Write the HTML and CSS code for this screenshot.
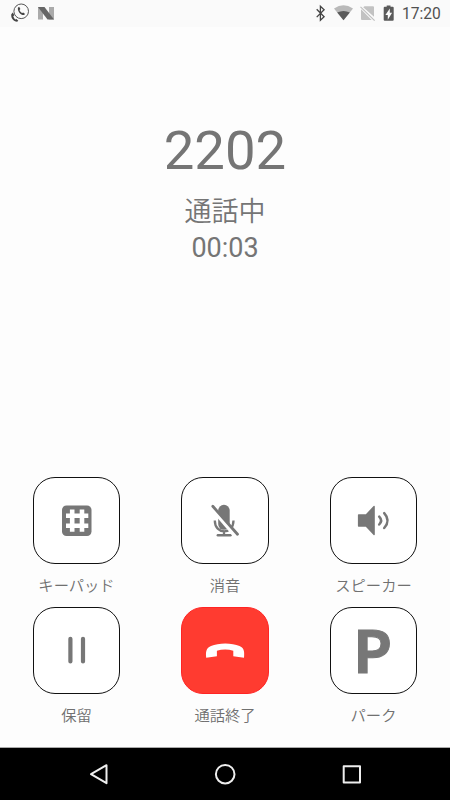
FILE: index.html
```
<!DOCTYPE html>
<html lang="ja">
<head>
<meta charset="utf-8">
<title>通話中</title>
<link rel="stylesheet" href="styles.css">
</head>
<body>
<div class="screen">
  <header class="status">
    <svg class="status-left" width="60" height="27" viewBox="0 0 60 27">
      <g fill="#444">
        <path d="M11.300 14.200l1.500-1.700 1.500 2.800-1 1c.3 1.300 1 2.400 1.900 3.200l1.300-.4 1.800 1.700-1.200 1c-3.600-.4-6.400-4-5.800-7.600z"/>
        <circle cx="21.200" cy="11.300" r="7.300" fill="#fafafa" stroke="#555" stroke-width="1"/>
        <path d="M17.900 7.700l1.200-.9 1.300 2.100-.9 1c.4 1.400 1.400 2.500 2.700 3.200l1-.7 1.900 1.600-1.100 1.100c-3.300.2-6.700-4-6.100-7.400z"/>
      </g>
      <path d="M38 7h5v12.500h-5zM49 7h5v12.500h-5z" fill="#aaa"/>
      <path d="M38 7h6.500L54 19.500h-6.500z" fill="#666"/>
    </svg>
    <div class="status-right">
      <svg width="82" height="27" viewBox="0 0 82 27">
        <path d="M1.700 9.300l7.400 7.400-3.700 3.500V6.200l3.700 3.500-7.400 7.400" fill="none" stroke="#444" stroke-width="1.300"/>
        <path d="M19 8.600Q28.500 2 38 8.600L28.500 20.300z" fill="#b9b9b9"/>
        <path d="M22.200 12.500Q28.500 9.400 34.800 12.500L28.500 20.300z" fill="#5b5b5b"/>
        <path d="M49.500 6.200H58q1 0 1 1V16.800L48.200 7.200zM46 9.200L56.700 19.900H47q-1 0-1-1z" fill="#c2c2c2"/>
        <path d="M45.500 6.800L59.600 20.600" stroke="#bdbdbd" stroke-width="1.100"/>
        <path d="M71.700 5.500h3.800v1.300h2.200q1 0 1 1v12q0 1-1 1h-8q-1 0-1-1v-12q0-1 1-1h2z" fill="#5a5a5a"/>
        <path d="M74.800 8.500v4.200h2.300l-4.300 7v-4.800h-2.400z" fill="#fafafa"/>
      </svg>
      <span class="clock">17:20</span>
    </div>
  </header>
  <main class="call">
    <section class="info">
      <div class="number">2202</div>
      <div class="state">通話中</div>
      <div class="timer">00:03</div>
    </section>
    <section class="actions">
      <div class="action">
        <div class="key">
          <svg width="87" height="87" viewBox="0 0 87 87">
            <rect x="29" y="28.500" width="29.500" height="30.500" rx="4.500" fill="#777"/>
            <path d="M33 38.800h22.300M33 48.700h22.300M39.200 32.500v22.300M49 32.500v22.300" stroke="#fff" stroke-width="4.600"/>
          </svg>
        </div>
        <span class="label">キーパッド</span>
      </div>
      <div class="action">
        <div class="key">
          <svg width="88" height="87" viewBox="0 0 88 87">
            <rect x="37.200" y="27.800" width="11.500" height="25" rx="5.700" fill="#777"/>
            <path d="M33.800 43.500c0 14.500 18.700 14.500 18.700 0M43 54v4" fill="none" stroke="#777" stroke-width="2.300"/>
            <path d="M36.800 58.200h12.700" stroke="#777" stroke-width="2.400" stroke-linecap="round"/>
            <path d="M30.500 30.500L54.500 58.500" stroke="#fff" stroke-width="4.600"/>
            <path d="M31.800 29.300L56.500 57.300" stroke="#777" stroke-width="2.800" stroke-linecap="round"/>
          </svg>
        </div>
        <span class="label">消音</span>
      </div>
      <div class="action">
        <div class="key">
          <svg width="87" height="87" viewBox="0 0 87 87">
            <path d="M28.600 38h7.500l8-8.500v28l-8-8.500h-7.500z" fill="#777" stroke="#777" stroke-width="1.400" stroke-linejoin="round"/>
            <path d="M49.200 39.600Q53 43.500 49.200 47.500M54.200 36.200Q60.900 43.500 54.200 51" fill="none" stroke="#777" stroke-width="2.500" stroke-linecap="round"/>
          </svg>
        </div>
        <span class="label">スピーカー</span>
      </div>
      <div class="action">
        <div class="key">
          <svg width="87" height="87" viewBox="0 0 87 87">
            <path d="M37.400 31.800v22.600M50 31.800v22.600" stroke="#777" stroke-width="4.200" stroke-linecap="round"/>
          </svg>
        </div>
        <span class="label">保留</span>
      </div>
      <div class="action">
        <div class="key key-end">
          <svg width="88" height="87" viewBox="0 0 88 87">
            <path d="M25.200 50.700c-.8-7 .8-9.800 4.800-11.600 7.500-3.600 21-3.600 28.500 0 4 1.800 5.300 4.600 4.500 11.600l-10.700-1.400v-5.600q-8.200-2.400-16.400 0v5.600z" fill="#fff"/>
          </svg>
        </div>
        <span class="label">通話終了</span>
      </div>
      <div class="action">
        <div class="key"><span class="park">P</span></div>
        <span class="label">パーク</span>
      </div>
    </section>
  </main>
  <nav class="navbar">
    <svg width="450" height="53" viewBox="0 0 450 53" fill="none" stroke="#eee" stroke-width="2" stroke-linejoin="round">
      <path d="M91 26.200L106.500 17.200v18z"/>
      <circle cx="225.200" cy="26.200" r="9.300"/>
      <rect x="343.700" y="18.200" width="16.300" height="16.300"/>
    </svg>
  </nav>
</div>
</body>
</html>
```
FILE: styles.css
```
body { margin: 0; }
.screen {
  width: 450px;
  height: 800px;
  display: flex;
  flex-direction: column;
  overflow: hidden;
  background: #fdfdfd;
  color: #757575;
  font-family: Roboto, "Noto Sans CJK JP", sans-serif;
}
.status {
  height: 27px;
  flex: none;
  display: flex;
  justify-content: space-between;
  background: #fafafa;
}
.status svg { display: block; }
.status-right { display: flex; padding-right: 8px; }
.clock {
  width: 40px;
  margin-left: 5px;
  line-height: 28px;
  font-size: 15.6px;
  color: #505050;
}
.call {
  flex: 1;
  display: flex;
  flex-direction: column;
  justify-content: space-between;
}
.info { text-align: center; padding-top: 91px; }
.number { font-size: 54.5px; line-height: 64px; }
.state { font-size: 27px; line-height: 40px; font-weight: 350; margin-top: 10px; }
.timer { font-size: 27px; line-height: 32px; }
.actions {
  display: grid;
  grid-template-columns: 87px 88px 87px;
  grid-auto-rows: 130px;
  column-gap: 61px;
  padding: 0 33px 10px;
}
.action {
  display: flex;
  flex-direction: column;
  align-items: center;
}
.key {
  box-sizing: border-box;
  width: 100%;
  height: 87px;
  flex: none;
  display: flex;
  align-items: center;
  justify-content: center;
  border: 1px solid #111;
  border-radius: 22px;
  background: #fff;
}
.key svg { flex: none; }
.key-end { background: #ff3b30; border-color: #ff2424; }
.park {
  font: bold 58px/85px "Noto Sans CJK JP", sans-serif;
  color: #777;
  -webkit-text-stroke: 1px #777;
  padding: 0 2px 5px 0;
}
.label {
  margin-top: 10px;
  font-size: 15.3px;
  line-height: 24px;
  font-weight: 350;
  white-space: nowrap;
  color: #707070;
}
.navbar {
  height: 52px;
  flex: none;
  background: #000;
  border-top: 1px solid #aaa;
}
.navbar svg { display: block; }
```
